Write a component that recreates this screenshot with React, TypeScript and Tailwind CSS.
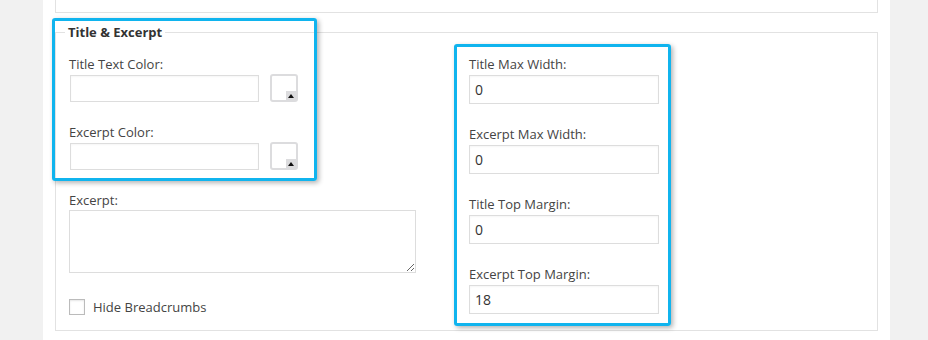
import React from "react";

const font = { fontFamily: '"Open Sans", "Noto Sans", sans-serif' };

function ColorPick() {
  return (
    <div className="relative w-[28px] h-[28px] border-2 border-[#dcdcde] rounded-[3px] bg-white -mt-[1px]">
      <div className="absolute right-0 bottom-0 w-[10px] h-[9px] bg-[#dcdcde] flex items-center justify-center">
        <svg width="6" height="4" viewBox="0 0 6 4">
          <polygon points="0,4 6,4 3,0" fill="#111" />
        </svg>
      </div>
    </div>
  );
}

function ColorField({ label, mt }: { label: string; mt: string }) {
  return (
    <div className={mt}>
      <div className="leading-[18px] text-[13px] text-[#444] mb-[2px]">{label}</div>
      <div className="flex items-start gap-[11px] pl-[1px]">
        <div className="w-[189px] h-[27px] border border-[#dddddd] bg-white shadow-[inset_0_1px_2px_rgba(0,0,0,0.04)]" />
        <ColorPick />
      </div>
    </div>
  );
}

function NumField({ label, value, mt }: { label: string; value: string; mt: string }) {
  return (
    <div className={mt}>
      <div className="leading-[18px] text-[13px] text-[#444] mb-[2px]">{label}</div>
      <div className="w-[190px] h-[29px] border border-[#dddddd] bg-white flex items-center pl-[5px] text-[14px] text-[#333] shadow-[inset_0_1px_2px_rgba(0,0,0,0.04)]">
        {value}
      </div>
    </div>
  );
}

export default function App() {
  return (
    <div className="relative w-[928px] h-[340px] bg-[#f1f1f1] flex overflow-hidden" style={font}>
      <div className="w-[43px] shrink-0" />
      <div className="w-[847px] h-full bg-white px-[12px] flex flex-col">
        <div className="h-[13px] border-x border-b border-[#e2e2e2]" />
        <div className="relative mt-[19px] h-[299px] border border-[#e2e2e2]">
          <span className="absolute -top-[10px] left-[9px] bg-white px-[3px] leading-[18px] text-[13px] font-bold text-[#333]">
            Title &amp; Excerpt
          </span>
          <div className="grid grid-cols-[400px_1fr] pl-[13px] pt-[22px]">
            <div className="flex flex-col">
              <ColorField label="Title Text Color:" mt="" />
              <ColorField label="Excerpt Color:" mt="mt-[21px]" />
              <div className="mt-[21px]">
                <div className="leading-[18px] text-[13px] text-[#444] mb-[1px]">Excerpt:</div>
                <textarea
                  className="block w-[347px] h-[63px] border border-[#dddddd] bg-white outline-none"
                  defaultValue=""
                />
              </div>
              <label className="mt-[26px] flex items-center gap-[8px] text-[13px] text-[#444] leading-[16px]">
                <span className="w-[16px] h-[16px] border border-[#bbbbbb] bg-white shadow-[inset_0_1px_2px_rgba(0,0,0,0.1)]" />
                <span>Hide Breadcrumbs</span>
              </label>
            </div>
            <div className="flex flex-col">
              <NumField label="Title Max Width:" value="0" mt="" />
              <NumField label="Excerpt Max Width:" value="0" mt="mt-[21px]" />
              <NumField label="Title Top Margin:" value="0" mt="mt-[21px]" />
              <NumField label="Excerpt Top Margin:" value="18" mt="mt-[21px]" />
            </div>
          </div>
        </div>
      </div>
      <div className="absolute left-[52px] top-[18px] w-[265px] h-[163px] border-[3px] border-[#10b4ee] rounded-[3px] shadow-[2px_2px_5px_rgba(0,0,0,0.3)] pointer-events-none" />
      <div className="absolute left-[454px] top-[44px] w-[217px] h-[282px] border-[3px] border-[#10b4ee] rounded-[3px] shadow-[2px_2px_5px_rgba(0,0,0,0.3)] pointer-events-none" />
    </div>
  );
}
